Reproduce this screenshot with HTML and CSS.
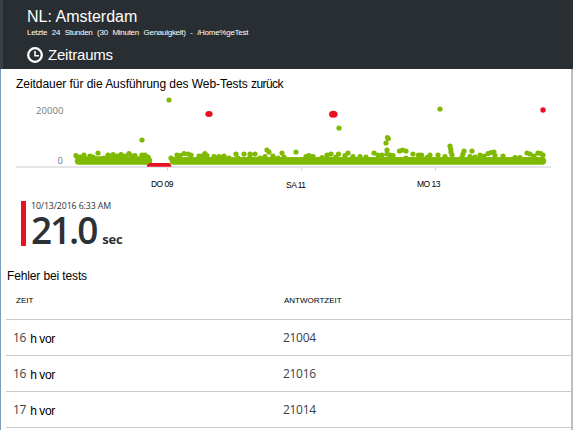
FILE: index.html
```html
<!DOCTYPE html>
<html lang="de">
<head>
<meta charset="utf-8">
<title>NL: Amsterdam</title>
<link rel="stylesheet" href="styles.css">
</head>
<body>
<header class="header">
  <h1 class="title">NL: Amsterdam</h1>
  <p class="subtitle">Letzte 24 Stunden (30 Minuten Genauigkeit) - /Home%geTest</p>
  <div class="range">
    <svg class="clock" width="16" height="16" viewBox="0 0 16 16"><circle cx="8" cy="8" r="6.800"/><path d="M8 4v4.700h4"/></svg>
    <span class="range-label">Zeitraums</span>
  </div>
</header>
<main class="panel">
  <h2 class="chart-title"><span>Zeitdauer für die Ausführung des Web-Tests</span> <span class="tight">zurück</span></h2>
  <svg class="chart" width="570" height="98" viewBox="1 92 570 98">
    <path class="axis" d="M16 167H551"/>
    <path class="tick" d="M167.500 168v3M301.500 168v3M435.500 168v3"/>
    <path class="band" d="M78.500 161H148.500M173.500 161H542.500"/>
    <path class="band-top" d="M78 158.500H149M172.500 159.500H543"/>
    <path class="dots" d="M76 155.700h0M80 157h0M84 155h0M90 156h0M93 157h0M98 153h0M104 158h0M108 155h0M113 154.500h0M117 156h0M121 154.500h0M125 156h0M129 153.500h0M132 156h0M135 155.500h0M142 155h0M145 155h0M148 157h0M142 140h0M169 100h0M171 158h0M177 155h0M180 155.500h0M184 153.500h0M188 154h0M191 155h0M199 156h0M202 156h0M205 153.500h0M207 155.500h0M214 156.500h0M219 156.500h0M224 156h0M229 158h0M236 154h0M238 158h0M244 154h0M250 154h0M255 154h0M250 157h0M260 158h0M265 156.500h0M267 150h0M269 152h0M273 156h0M278 158h0M282 153h0M284 157h0M296 152h0M306 156.500h0M309 155.500h0M313 156.500h0M322 157.500h0M327 155h0M331 154h0M338.500 154h0M336 157h0M345 155.500h0M348 153h0M353 156.500h0M360 156.500h0M366 157h0M374 153h0M378 155h0M339 128h0M387.500 137.500h0M386 143h0M388.300 138.500h0M387 150h0M382 155h0M387 154h0M390 155h0M393 155.500h0M399.500 151h0M402.500 150h0M406 151h0M406 158h0M413 154h0M418.500 155h0M421.500 155h0M430 155h0M427 157.500h0M438 155h0M445 156.500h0M450 146h0M450.700 149h0M451 152h0M452 155h0M464 151h0M463 154h0M462 157h0M472 151h0M470 156.500h0M475 157h0M480 155h0M484 156h0M488 153.500h0M491 152.500h0M494 152h0M495 155.500h0M503 156h0M515 157.500h0M520 157.500h0M527 153h0M530 154h0M534 156h0M538 153h0M541 153.500h0M543 155h0M440 109h0"/>
    <path class="outage" d="M149.500 163h20l1.800 2v1.800h-24.300v-1.800z"/>
    <g class="failed"><ellipse cx="209" cy="114" rx="3.700" ry="3"/><ellipse cx="333.300" cy="114.200" rx="4.300" ry="3.500"/><circle cx="543" cy="110" r="2.700"/></g>
    <g class="y-label"><text x="36" y="114" textLength="27.500">20000</text><text x="57.500" y="164">0</text></g>
    <g class="x-label"><text x="151" y="186.500" textLength="22.500">DO 09</text><text x="286" y="187.500" textLength="20">SA 11</text><text x="417" y="186.500" textLength="23.500">MO 13</text></g>
  </svg>
  <section class="metric">
    <div class="metric-date">10/13/2016 6:33 AM</div>
    <div class="metric-value"><span class="number">21.0</span><span class="unit">sec</span></div>
  </section>
  <h2 class="table-title">Fehler bei tests</h2>
  <div class="table">
    <div class="row head"><span>ZEIT</span><span>ANTWORTZEIT</span></div>
    <div class="row"><span class="time"><b class="num">16</b><span class="ago">h vor</span></span><b class="num">21004</b></div>
    <div class="row"><span class="time"><b class="num">16</b><span class="ago">h vor</span></span><b class="num">21016</b></div>
    <div class="row"><span class="time"><b class="num">17</b><span class="ago">h vor</span></span><b class="num">21014</b></div>
  </div>
</main>
</body>
</html>
```
FILE: styles.css
```css
* { box-sizing: border-box; }
html, body { margin: 0; height: 430px; overflow: hidden; }
body { background: #fff; color: #000; font-family: "Liberation Sans", Arial, sans-serif; }
h1, h2, p { margin: 0; font-weight: normal; }
.header { height: 69px; padding: 8px 0 0 24px; background: #292e32; border-left: 3px solid #3b4045; color: #fff; }
.title { font-size: 16px; line-height: 18px; }
.subtitle { margin-top: 2px; font-size: 8px; line-height: 10px; letter-spacing: -.27px; word-spacing: 2.6px; white-space: nowrap; }
.range { display: flex; align-items: center; gap: 5px; height: 18px; margin-top: 8px; font-size: 15px; line-height: 18px; letter-spacing: -.2px; }
.clock { margin-top: -1px; fill: none; stroke: #fff; stroke-width: 2.3; }
.clock path { stroke-width: 1.6; }
.panel { height: 361px; border-left: 1px solid #7b9ebf; border-right: 2px solid #bfbfbf; }
.chart-title { height: 23px; padding: 7px 0 0 15px; font-size: 12px; line-height: 16px; letter-spacing: -.05px; white-space: nowrap; }
.tight { letter-spacing: -.6px; }
.chart { display: block; }
.axis { stroke: #e5e5e5; stroke-width: 2; }
.tick { stroke: #d5d7d9; stroke-width: 1; }
.band, .band-top, .dots { fill: none; stroke: #7fba00; stroke-linecap: round; }
.band { stroke-width: 7.4; }
.band-top { stroke-width: 4.4; }
.dots { stroke-width: 5.2; }
.outage, .failed { fill: #e81123; }
.y-label { font: 9.5px "Open Sans", sans-serif; fill: #75787b; }
.x-label { font-size: 8.5px; fill: #000; }
.metric { height: 45px; margin: 11px 0 0 20px; padding-left: 5px; border-left: 5px solid #e81123; color: #2c3136; font-family: "Open Sans", sans-serif; }
.metric-date { height: 11px; font-size: 8.8px; line-height: 11px; letter-spacing: -.12px; white-space: nowrap; }
.metric-value { display: flex; align-items: baseline; gap: 6px; line-height: 35px; font-weight: 600; }
.number { font-size: 37px; letter-spacing: -2.1px; }
.unit { font-size: 13px; font-weight: 700; letter-spacing: -.2px; }
.table-title { margin-top: 22px; padding-left: 6px; font-size: 12px; line-height: 16px; letter-spacing: -.13px; }
.table { margin-left: 5px; }
.row { display: grid; grid-template-columns: 270px 1fr; align-items: center; height: 36px; padding-left: 7px; border-bottom: 1px solid #c8c8c8; }
.head { padding: 0 0 2px 10px; grid-template-columns: 268px 1fr; font-size: 8px; }
.time { display: flex; align-items: center; gap: 4px; }
.num { font: 12px "Open Sans", sans-serif; color: #3c4147; letter-spacing: -.3px; }
.ago { padding-top: 2px; font-size: 12px; line-height: 14px; letter-spacing: -.4px; }
```
